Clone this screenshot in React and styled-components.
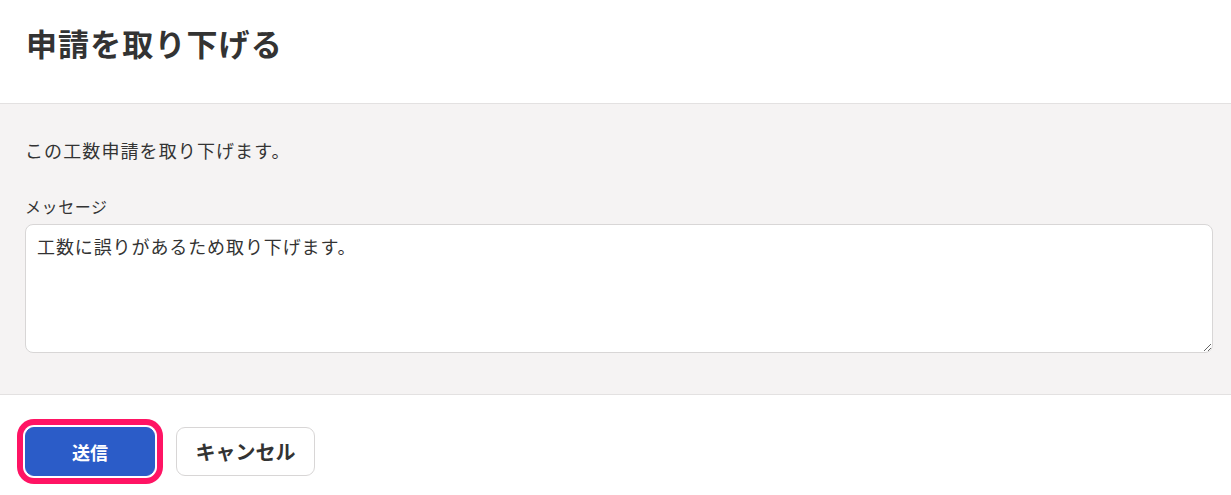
import React from 'react'
import styled, { createGlobalStyle } from 'styled-components'

const Global = createGlobalStyle`
    body {
        margin: 0;
        background: #fff;
        font-family: "Noto Sans CJK JP", "Noto Sans", sans-serif;
        color: #333;
    }
`

const Dialog = styled.div`
    width: 1231px;
    height: 495px;
    overflow: hidden;
    display: flex;
    flex-direction: column;
`

const Header = styled.div`
    box-sizing: border-box;
    height: 104px;
    padding: 21px 26px 0;
    border-bottom: 1px solid #e3e1e1;
`

const Title = styled.h1`
    margin: 0;
    font-size: 31px;
    line-height: 44px;
    font-weight: 700;
    color: #333;
    letter-spacing: 1.1px;
`

const Body = styled.div`
    background: #f5f3f3;
    padding: 31px 18px 41px 25px;
    border-bottom: 1px solid #e3e1e1;
`

const Lead = styled.p`
    margin: 0 0 30px;
    font-size: 18px;
    letter-spacing: 1.1px;
    line-height: 30px;
`

const Label = styled.label`
    display: block;
    font-size: 16px;
    letter-spacing: 0.6px;
    line-height: 22px;
    margin-bottom: 7px;
`

const Textarea = styled.textarea`
    display: block;
    box-sizing: border-box;
    width: 100%;
    height: 129px;
    padding: 7px 11px;
    border: 1px solid #d8d6d6;
    border-radius: 8px;
    background: #fff;
    font-family: inherit;
    font-size: 18px;
    letter-spacing: 0.9px;
    line-height: 28px;
    color: #333;
    resize: vertical;
`

const Footer = styled.div`
    display: flex;
    gap: 21px;
    padding: 32px 25px 0;
`

const Button = styled.button`
    box-sizing: border-box;
    height: 49px;
    border-radius: 9px;
    font-family: inherit;
    font-weight: 700;
    font-size: ${p => (p.$primary ? '18px' : '20px')};
    color: ${p => (p.$primary ? '#fff' : '#333')};
    background: ${p => (p.$primary ? '#2b5cc8' : '#fff')};
    border: 1px solid ${p => (p.$primary ? '#2b5cc8' : '#d8d6d6')};
    width: ${p => (p.$primary ? '130px' : '139px')};
    box-shadow: ${p => (p.$highlight ? '0 0 0 2px #fff, 0 0 0 8px #ff1464' : 'none')};
    cursor: pointer;
`

function App() {
    return (
        <Dialog>
            <Global />
            <Header>
                <Title>申請を取り下げる</Title>
            </Header>
            <Body>
                <Lead>この工数申請を取り下げます。</Lead>
                <Label htmlFor="message">メッセージ</Label>
                <Textarea id="message" defaultValue="工数に誤りがあるため取り下げます。" />
            </Body>
            <Footer>
                <Button $primary $highlight>送信</Button>
                <Button>キャンセル</Button>
            </Footer>
        </Dialog>
    )
}

export default App
